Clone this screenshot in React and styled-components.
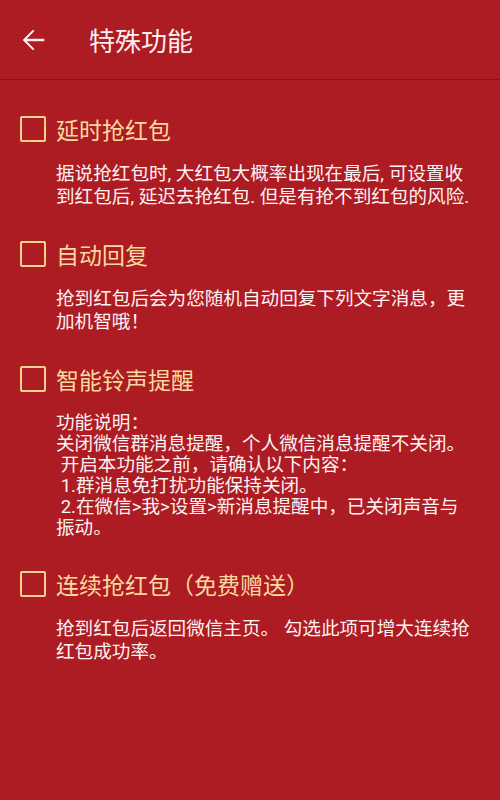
import React, { useState } from 'react';
import styled, { createGlobalStyle } from 'styled-components';

// Roboto for latin/digits, DejaVu for the full-width punctuation (centred like on the device), Noto for the hanzi
const FONT = 'Roboto, "DejaVu Sans", "Noto Sans CJK SC", sans-serif';

const GlobalStyle = createGlobalStyle`
  html, body {
    margin: 0;
    padding: 0;
    background: #ad1b23;
  }
  body {
    font-family: ${FONT};
  }
`;

const Page = styled.div`
  width: 500px;
  min-height: 800px;
  background: #ad1b23;
  display: flex;
  flex-direction: column;
`;

const Toolbar = styled.header`
  height: 80px;
  display: flex;
  align-items: center;
  border-bottom: 1px solid #8c1119;
  box-sizing: border-box;
`;

const BackButton = styled.button`
  width: 34px;
  height: 34px;
  margin-left: 16px;
  padding: 0;
  border: none;
  background: none;
  display: flex;
  align-items: center;
  justify-content: center;
  cursor: pointer;
`;

const Title = styled.h1`
  margin: 0 0 0 39px;
  font-size: 26px;
  font-weight: 400;
  color: #fbeeee;
  font-family: ${FONT};
`;

const List = styled.main`
  display: flex;
  flex-direction: column;
  gap: 25px;
  padding: 29px 30px 0 20px;
`;

const Section = styled.section`
  display: flex;
  flex-direction: column;
`;

const OptionRow = styled.label`
  height: 40px;
  display: flex;
  align-items: center;
  gap: 10px;
  cursor: pointer;
`;

const Box = styled.span`
  width: 26px;
  height: 26px;
  box-sizing: border-box;
  border: 2.5px solid #f4d38f;
  border-radius: 2px;
  display: flex;
  align-items: center;
  justify-content: center;
  color: #f4d38f;
  font-size: 18px;
  line-height: 1;
`;

const OptionTitle = styled.span`
  font-size: 23px;
  color: #f8da9e;
`;

const Description = styled.p`
  margin: 14px 0 0 36px;
  font-size: 18.6px;
  line-height: ${(p) => (p.$tight ? '21px' : '23px')};
  color: #fdf3f3;
  white-space: pre-wrap;
`;

const options = [
  {
    id: 'delay',
    title: '延时抢红包',
    text: '据说抢红包时, 大红包大概率出现在最后, 可设置收到红包后, 延迟去抢红包. 但是有抢不到红包的风险.',
  },
  {
    id: 'reply',
    title: '自动回复',
    text: '抢到红包后会为您随机自动回复下列文字消息，更加机智哦！',
  },
  {
    id: 'ring',
    title: '智能铃声提醒',
    tight: true,
    text: '功能说明：\n关闭微信群消息提醒，个人微信消息提醒不关闭。\n 开启本功能之前，请确认以下内容：\n 1.群消息免打扰功能保持关闭。\n 2.在微信>我>设置>新消息提醒中，已关闭声音与振动。',
  },
  {
    id: 'repeat',
    title: '连续抢红包（免费赠送）',
    text: '抢到红包后返回微信主页。 勾选此项可增大连续抢红包成功率。',
  },
];

function ArrowBack() {
  return (
    <svg width="34" height="34" viewBox="0 0 24 24" fill="#fbeeee">
      <path d="M20 11.1H7.6l5.4-5.4-1-1L4.7 12l7.3 7.3 1-1-5.4-5.4H20z" />
    </svg>
  );
}

export default function App() {
  const [checked, setChecked] = useState({});

  const toggle = (id) => setChecked((c) => ({ ...c, [id]: !c[id] }));

  return (
    <Page>
      <GlobalStyle />
      <Toolbar>
        <BackButton aria-label="返回">
          <ArrowBack />
        </BackButton>
        <Title>特殊功能</Title>
      </Toolbar>
      <List>
        {options.map((opt) => (
          <Section key={opt.id}>
            <OptionRow onClick={() => toggle(opt.id)}>
              <Box>{checked[opt.id] ? '✓' : ''}</Box>
              <OptionTitle>{opt.title}</OptionTitle>
            </OptionRow>
            <Description $tight={opt.tight}>{opt.text}</Description>
          </Section>
        ))}
      </List>
    </Page>
  );
}
